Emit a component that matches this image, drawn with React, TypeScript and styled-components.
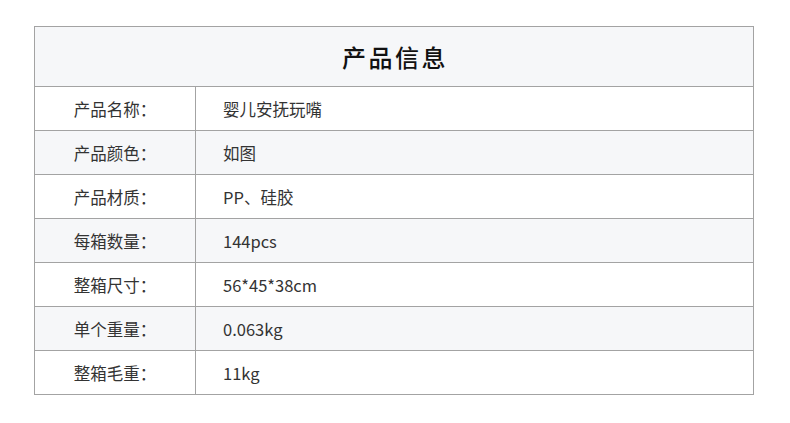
import React from 'react';
import styled, { createGlobalStyle } from 'styled-components';

const GlobalStyle = createGlobalStyle`
  html, body {
    margin: 0;
    padding: 0;
    background: #ffffff;
  }
  body {
    font-family: "Noto Sans CJK SC", "Noto Sans", sans-serif;
    color: #333333;
  }
`;

const Page = styled.div`
  padding: 26px 0 0 34px;
`;

const Table = styled.div`
  width: 718px;
  border: 1px solid #a3a3a3;
`;

const Header = styled.div`
  height: 59px;
  display: flex;
  align-items: center;
  justify-content: center;
  padding-left: 2px;
  background: #f6f7f9;
  font-size: 24px;
  font-weight: 500;
  letter-spacing: 2.5px;
  color: #111111;
`;

const Row = styled.div<{ $shaded: boolean }>`
  display: grid;
  grid-template-columns: 160px 1fr;
  height: 43px;
  border-top: 1px solid #a3a3a3;
  background: ${p => (p.$shaded ? '#f6f7f9' : '#ffffff')};
  font-size: 16.5px;
`;

const Label = styled.div`
  display: flex;
  align-items: center;
  justify-content: center;
`;

const Value = styled.div`
  display: flex;
  align-items: center;
  padding-left: 27px;
  border-left: 1px solid #a3a3a3;
`;

const rows: Array<[string, string]> = [
  ['产品名称：', '婴儿安抚玩嘴'],
  ['产品颜色：', '如图'],
  ['产品材质：', 'PP、硅胶'],
  ['每箱数量：', '144pcs'],
  ['整箱尺寸：', '56*45*38cm'],
  ['单个重量：', '0.063kg'],
  ['整箱毛重：', '11kg'],
];

export default function App() {
  return (
    <>
      <GlobalStyle />
      <Page>
        <Table>
          <Header>产品信息</Header>
          {rows.map(([label, value], i) => (
            <Row key={label} $shaded={i % 2 === 1}>
              <Label>{label}</Label>
              <Value>{value}</Value>
            </Row>
          ))}
        </Table>
      </Page>
    </>
  );
}
